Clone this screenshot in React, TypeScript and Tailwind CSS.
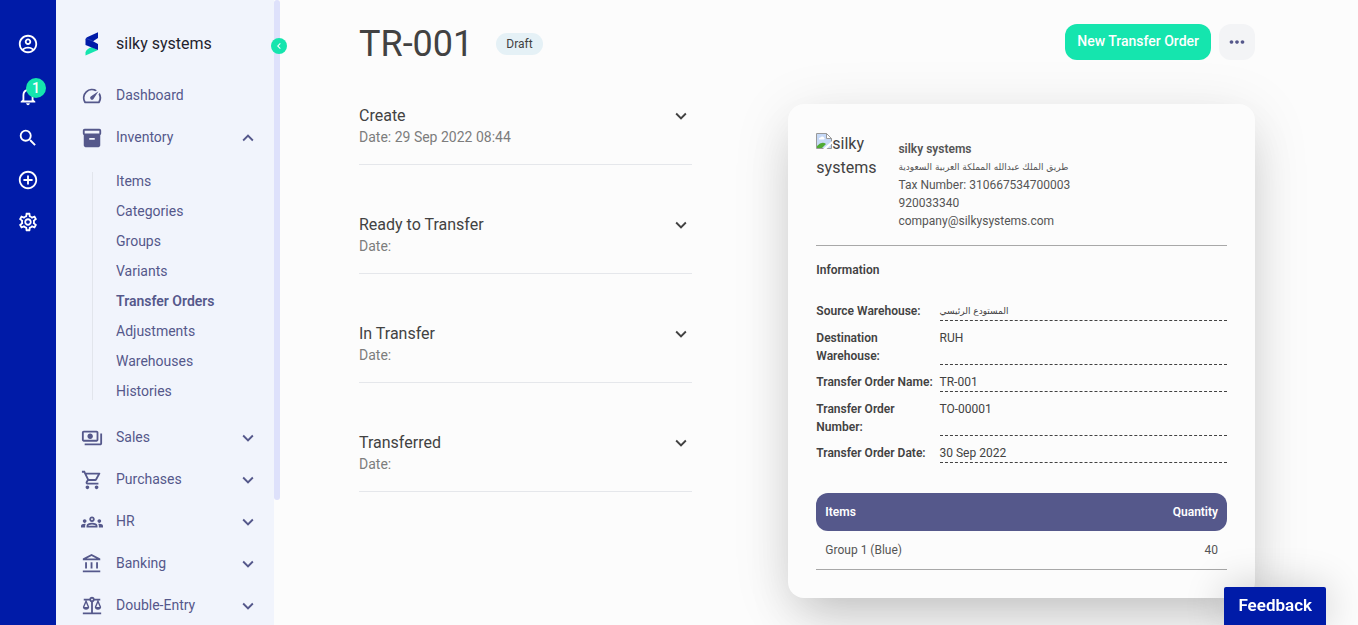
import React, { useState } from 'react';
import {
  MdAddCircleOutline,
  MdChevronLeft,
  MdExpandLess,
  MdExpandMore,
  MdInventory2,
  MdMoreHoriz,
  MdNotificationsNone,
  MdOutlineAccountBalance,
  MdOutlineAccountCircle,
  MdOutlineBalance,
  MdOutlineGroups,
  MdOutlinePayments,
  MdOutlineSettings,
  MdOutlineShoppingCart,
  MdOutlineSpeed,
  MdSearch,
} from 'react-icons/md';

interface MenuItem {
  label: string;
  icon: React.ElementType;
  children?: string[];
  expandable?: boolean;
}

interface Field {
  label: string;
  value: string;
  arabic?: boolean;
}

const menu: MenuItem[] = [
  { label: 'Dashboard', icon: MdOutlineSpeed },
  {
    label: 'Inventory',
    icon: MdInventory2,
    expandable: true,
    children: ['Items', 'Categories', 'Groups', 'Variants', 'Transfer Orders', 'Adjustments', 'Warehouses', 'Histories'],
  },
  { label: 'Sales', icon: MdOutlinePayments, expandable: true },
  { label: 'Purchases', icon: MdOutlineShoppingCart, expandable: true },
  { label: 'HR', icon: MdOutlineGroups, expandable: true },
  { label: 'Banking', icon: MdOutlineAccountBalance, expandable: true },
  { label: 'Double-Entry', icon: MdOutlineBalance, expandable: true },
];

const steps = [
  { title: 'Create', date: '29 Sep 2022 08:44' },
  { title: 'Ready to Transfer', date: '' },
  { title: 'In Transfer', date: '' },
  { title: 'Transferred', date: '' },
];

const fields: Field[] = [
  { label: 'Source Warehouse:', value: 'المستودع الرئيسي', arabic: true },
  { label: 'Destination Warehouse:', value: 'RUH' },
  { label: 'Transfer Order Name:', value: 'TR-001' },
  { label: 'Transfer Order Number:', value: 'TO-00001' },
  { label: 'Transfer Order Date:', value: '30 Sep 2022' },
];

const items = [{ name: 'Group 1 (Blue)', quantity: 40 }];

const Logo = () => (
  <svg viewBox="0 0 14 24" className="h-6 w-3.5" aria-hidden="true">
    <path d="M7 15l6 3L.5 23.5V20.500Q1 17 7 15z" fill="#15e5ae" />
    <path d="M13 .3V6L8 9.200 13 12v6L.5 13V7.500q0-1.500 1.500-2.200z" fill="#001ba8" />
    <path d="M.5 7.500Q1 6.500 2.500 7L8 9.200" fill="none" stroke="#3d50c0" strokeWidth=".6" />
  </svg>
);

const BrokenImage = () => (
  <svg viewBox="0 0 16 16" className="inline-block size-4 align-baseline" aria-hidden="true">
    <path d="M.5.500h10l5 5v10H.5z" fill="#c6d9f7" stroke="#9a9a9a" />
    <path d="M3 6.500a1.500 1.500 0 0 1 1.500-2 2 2 0 0 1 3.500 0 1.200 1.200 0 0 1 0 2z" fill="#fff" />
    <path d="M1 15v-2q5-5.500 9-2l-4 4z" fill="#4fab34" />
    <path d="M7 16 16 8v2.500L10.500 16z" fill="#fff" />
    <path d="M10.500.500v5h5z" fill="#fff" stroke="#9a9a9a" />
  </svg>
);

const IconRail = () => (
  <nav className="flex w-14 shrink-0 flex-col items-center gap-5 bg-[#001ba8] pt-[33px] text-[22px] text-white">
    <button aria-label="Profile" className="mb-2.5"><MdOutlineAccountCircle /></button>
    <button aria-label="Notifications" className="relative">
      <MdNotificationsNone />
      <span className="absolute -top-[7px] left-[9px] flex size-5 items-center justify-center rounded-full bg-[#15e5ae] text-sm font-medium">1</span>
    </button>
    <button aria-label="Search"><MdSearch /></button>
    <button aria-label="New"><MdAddCircleOutline /></button>
    <button aria-label="Settings"><MdOutlineSettings /></button>
  </nav>
);

const Sidebar = () => {
  const [open, setOpen] = useState<string | null>('Inventory');

  return (
    <aside className="relative flex w-56 shrink-0">
      <div className="flex-1 overflow-hidden bg-[#f1f4fc] pt-8">
        <div className="flex items-center pl-[29px]">
          <Logo />
          <span className="ml-[17px] text-base text-[#1f1f2e]">silky systems</span>
        </div>
        <ul className="mt-[19px] text-sm text-[#55588b]">
          {menu.map(({ label, icon: Icon, children, expandable }) => (
            <li key={label}>
              <button
                onClick={() => setOpen(open === label ? null : label)}
                className="flex h-[42px] w-full items-center pr-[15px] pl-[25px] text-left"
              >
                <Icon className="mr-[13px] size-[22px] shrink-0" />
                <span className="flex-1 pb-0.5">{label}</span>
                {expandable && (open === label ? <MdExpandLess className="size-[22px]" /> : <MdExpandMore className="size-[22px]" />)}
              </button>
              {children && open === label && (
                <ul className="mt-[13px] mb-[17px] ml-9 flex flex-col border-l border-[#e2e5ec] pl-[23px]">
                  {children.map(child => (
                    <li key={child} className="flex h-[30px] items-center first:-mt-1.5 last:-mb-1.5">
                      <a href="#" className={child === 'Transfer Orders' ? 'font-semibold' : ''}>{child}</a>
                    </li>
                  ))}
                </ul>
              )}
            </li>
          ))}
        </ul>
      </div>
      {/* Scroll thumb */}
      <div className="h-4/5 w-1.5 rounded-full bg-[#dee1fb]" />
      <button
        aria-label="Collapse menu"
        className="absolute top-[38px] -right-[7px] flex size-4 items-center justify-center rounded-full bg-[#15e5ae] text-xs text-white"
      >
        <MdChevronLeft />
      </button>
    </aside>
  );
};

const Timeline = () => (
  <div className="space-y-12">
    {steps.map(step => (
      <section key={step.title} className="border-b border-gray-200 pb-[18px]">
        <div className="flex items-center justify-between">
          <h2 className="text-base/6">{step.title}</h2>
          <button aria-label={`Toggle ${step.title}`}><MdExpandMore className="size-[22px]" /></button>
        </div>
        <p className="text-sm/[18px] text-[#7d7d7d]">Date: {step.date}</p>
      </section>
    ))}
  </div>
);

const Document = () => (
  <article className="rounded-2xl bg-[#fcfcfc] p-7 text-xs/[18px] shadow-[0_10px_60px_rgba(0,0,0,0.1),0_25px_50px_-12px_rgba(0,0,0,0.18)]">
    <header className="grid grid-cols-[1fr_4fr] border-b border-[#a8a8a8] pb-[15px]">
      <div className="text-base/6"><BrokenImage />silky systems</div>
      <div className="pt-2 text-[#555]">
        <p className="font-semibold">silky systems</p>
        <p className="h-[18px] font-['DejaVu_Sans',sans-serif] text-[9px]/[18px]"><bdi>طريق الملك عبدالله المملكة العربية السعودية</bdi></p>
        <p>Tax Number: 310667534700003</p>
        <p>920033340</p>
        <p>company@silkysystems.com</p>
      </div>
    </header>

    <h3 className="mt-[15px] mb-[23px] font-semibold">Information</h3>
    <dl className="space-y-2">
      {fields.map(field => (
        <div key={field.label} className="grid grid-cols-[3fr_7fr]">
          <dt className="font-semibold">{field.label}</dt>
          <dd className="border-b border-dashed border-[#424242]">
            {field.arabic ? <bdi className="block h-[18px] font-['DejaVu_Sans',sans-serif] text-[9px]/[18px] text-left">{field.value}</bdi> : field.value}
          </dd>
        </div>
      ))}
    </dl>

    <table className="mt-[30px] w-full border-separate border-spacing-0">
      <thead>
        <tr className="text-white">
          <th className="rounded-l-xl bg-[#55588b] px-[9px] py-2.5 text-left font-semibold">Items</th>
          <th className="rounded-r-xl bg-[#55588b] px-[9px] py-2.5 text-right font-semibold">Quantity</th>
        </tr>
      </thead>
      <tbody className="text-[#555]">
        {items.map(item => (
          <tr key={item.name}>
            <td className="border-b border-[#a8a8a8] px-[9px] py-2.5">{item.name}</td>
            <td className="border-b border-[#a8a8a8] px-[9px] py-2.5 text-right">{item.quantity}</td>
          </tr>
        ))}
      </tbody>
    </table>
  </article>
);

const App: React.FC = () => {
  return (
    <div className="flex h-screen overflow-hidden bg-[#fcfcfc] font-[Roboto,sans-serif] text-[#424242]">
      <IconRail />
      <Sidebar />
      <main className="flex-1 pt-6 pr-[103px] pl-[79px]">
        <div className="mb-11 flex h-9 items-center">
          <div className="flex items-center pt-1">
            <h1 className="text-4xl">TR-001</h1>
            <span className="ml-[23px] rounded-full bg-[#e5f1f6] px-2.5 py-0.5 text-xs/[18px]">Draft</span>
          </div>
          <button className="ml-auto h-9 rounded-xl bg-[#15e5ae] px-3 pb-0.5 text-sm font-medium text-white">New Transfer Order</button>
          <button aria-label="More actions" className="ml-2 flex size-9 items-center justify-center rounded-xl bg-gray-100 text-[22px] text-[#55588b]">
            <MdMoreHoriz />
          </button>
        </div>
        <div className="grid grid-cols-[5fr_7fr] items-start gap-24">
          <Timeline />
          <Document />
        </div>
      </main>

      <button className="fixed right-8 bottom-0 h-[38px] rounded-t-xs bg-[#001ba8] px-3.5 text-[17px] font-semibold text-white shadow-[0_0_40px_rgba(0,0,0,0.2)]">
        Feedback
      </button>
    </div>
  );
};

export default App;
